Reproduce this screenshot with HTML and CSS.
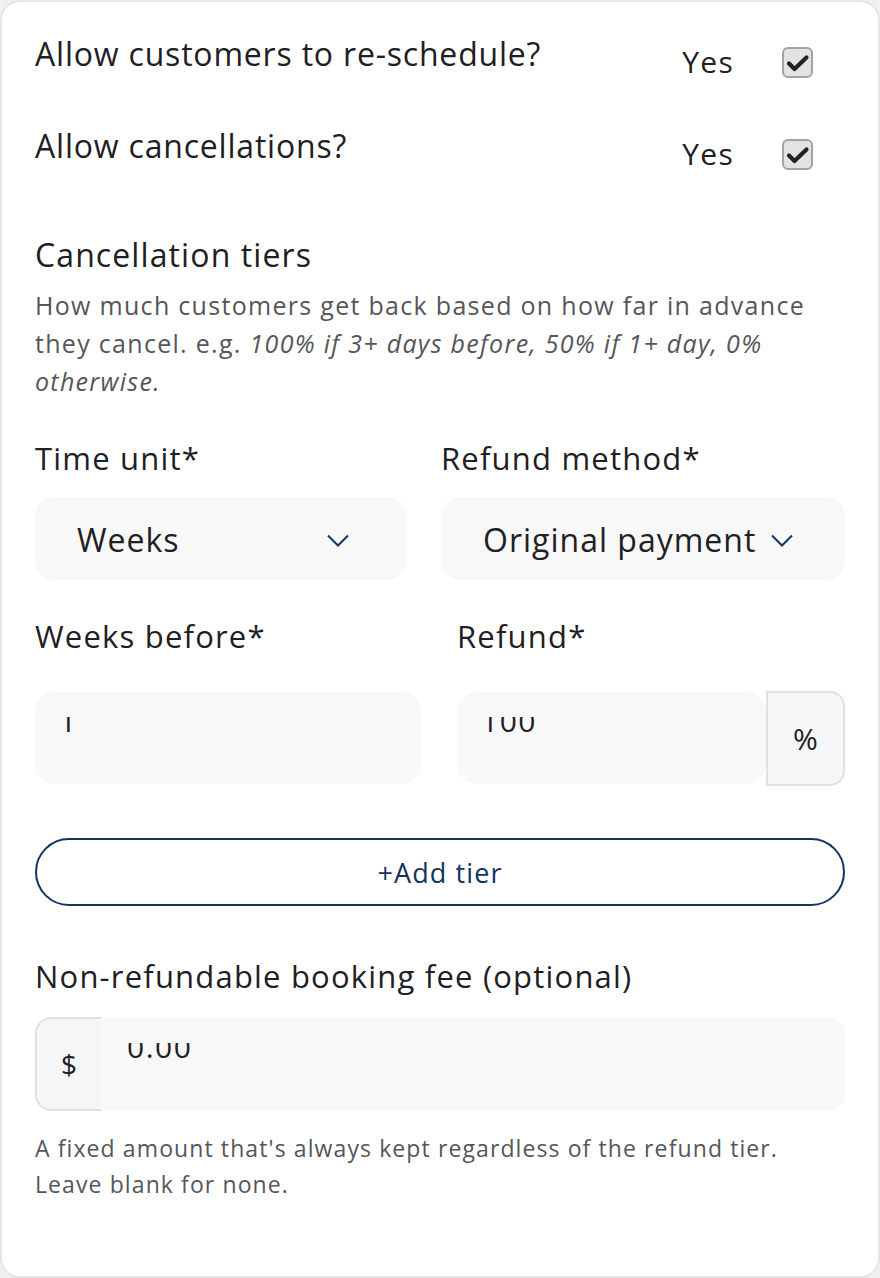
FILE: index.html
```html
<!DOCTYPE html>
<html lang="en">
<head>
<meta charset="utf-8">
<title>Cancellation settings</title>
<link rel="stylesheet" href="styles.css">
</head>
<body>
<div class="card">
  <div class="toggle-row">
    <div class="toggle-label">Allow customers to re-schedule?</div>
    <div class="toggle-control">
      <span class="toggle-yes">Yes</span>
      <svg class="checkbox" width="31" height="31" viewBox="0 0 31 31"><rect x="1" y="1" width="29" height="29" rx="5" fill="#e3e3e3" stroke="#a3a3a3" stroke-width="2"/><path d="M7 16.5 L12.5 22 L24.5 10.5" fill="none" stroke="#222" stroke-width="4.2" stroke-linecap="round" stroke-linejoin="round"/></svg>
    </div>
  </div>
  <div class="toggle-row">
    <div class="toggle-label">Allow cancellations?</div>
    <div class="toggle-control">
      <span class="toggle-yes">Yes</span>
      <svg class="checkbox" width="31" height="31" viewBox="0 0 31 31"><rect x="1" y="1" width="29" height="29" rx="5" fill="#e3e3e3" stroke="#a3a3a3" stroke-width="2"/><path d="M7 16.5 L12.5 22 L24.5 10.5" fill="none" stroke="#222" stroke-width="4.2" stroke-linecap="round" stroke-linejoin="round"/></svg>
    </div>
  </div>

  <h2 class="section-title">Cancellation tiers</h2>
  <p class="section-desc">How much customers get back based on how far in advance they cancel. e.g. <em>100% if 3+ days before, 50% if 1+ day, 0% otherwise.</em></p>

  <div class="grid grid-selects">
    <div class="field">
      <div class="field-label">Time unit*</div>
      <div class="select select-unit">
        <span class="select-text">Weeks</span>
        <svg class="chevron" width="22" height="13" viewBox="0 0 22 13"><path d="M1 1.5 L11 11.5 L21 1.5" fill="none" stroke="#12345f" stroke-width="2"/></svg>
      </div>
    </div>
    <div class="field">
      <div class="field-label">Refund method*</div>
      <div class="select select-method">
        <span class="select-text">Original payment</span>
        <svg class="chevron" width="22" height="13" viewBox="0 0 22 13"><path d="M1 1.5 L11 11.5 L21 1.5" fill="none" stroke="#12345f" stroke-width="2"/></svg>
      </div>
    </div>
  </div>

  <div class="grid grid-inputs">
    <div class="field">
      <div class="field-label">Weeks before*</div>
      <div class="text-input field-control input-weeks">
        <div class="value-clip"><div class="value">1</div></div>
      </div>
    </div>
    <div class="field">
      <div class="field-label">Refund*</div>
      <div class="input-group field-control">
        <div class="text-input input-refund">
          <div class="value-clip"><div class="value">100</div></div>
        </div>
        <div class="addon addon-right">%</div>
      </div>
    </div>
  </div>

  <button class="add-tier" type="button">+Add tier</button>

  <div class="field fee-field">
    <div class="field-label">Non-refundable booking fee (optional)</div>
    <div class="input-group fee-group">
      <div class="addon addon-left">$</div>
      <div class="text-input input-fee">
        <div class="value-clip"><div class="value">0.00</div></div>
      </div>
    </div>
    <p class="helper">A fixed amount that's always kept regardless of the refund tier. Leave blank for none.</p>
  </div>
</div>
</body>
</html>
```

FILE: styles.css
```css
* { box-sizing: border-box; }

html, body {
  margin: 0;
  padding: 0;
  background: #efefef;
}

body {
  font-family: "Open Sans", "Noto Sans", sans-serif;
  color: #1f2023;
}

.card {
  width: 880px;
  height: 1278px;
  background: #ffffff;
  border: 2px solid #e6e6e6;
  border-radius: 20px;
  padding: 32px 33px 0 33px;
}

.toggle-row {
  display: flex;
  justify-content: space-between;
  align-items: flex-start;
  height: 92px;
}

.toggle-label {
  font-size: 32px;
  line-height: 40px;
  font-weight: 500;
  letter-spacing: 0.8px;
}

.toggle-control {
  display: flex;
  align-items: center;
  gap: 48px;
  height: 40px;
  margin-top: 8px;
  margin-right: 32px;
}

.toggle-yes {
  font-size: 30px;
  line-height: 40px;
  letter-spacing: 1.3px;
}

.checkbox { display: block; }

.section-title {
  margin: 17px 0 0 0;
  font-size: 32px;
  line-height: 40px;
  font-weight: 500;
  letter-spacing: 1.1px;
}

.section-desc {
  margin: 11px 0 0 0;
  font-size: 25px;
  line-height: 38px;
  letter-spacing: 1.3px;
  color: #555659;
}

.section-desc em { font-style: italic; }

.grid { display: grid; }

.grid-selects {
  grid-template-columns: 372px 1fr;
  column-gap: 34px;
  margin-top: 38px;
}

.grid-inputs {
  grid-template-columns: 386px 1fr;
  column-gap: 36px;
  margin-top: 36px;
}

.field-label {
  font-size: 31px;
  line-height: 40px;
  font-weight: 500;
  letter-spacing: 1.2px;
}

.select {
  display: flex;
  align-items: center;
  height: 83px;
  margin-top: 19px;
  padding: 3px 0 0 42px;
  background: #f8f8f8;
  border-radius: 20px;
  font-size: 32px;
  letter-spacing: 1px;
}

.select-text { line-height: 40px; }

.chevron { display: block; margin-left: auto; }

.select-unit { padding-right: 58px; }
.select-method { padding-right: 52px; }

.field-control { margin-top: 36px; }

.text-input {
  height: 92px;
  background: #f8f8f8;
  border-radius: 20px;
  padding: 25px 26px 0 24px;
}

.value-clip {
  height: 40px;
  overflow: hidden;
}

.value {
  font-size: 30px;
  line-height: 30px;
  margin-top: -11.5px;
  letter-spacing: 1.5px;
  color: #1f2023;
}

.input-group {
  display: flex;
  align-items: center;
  height: 92px;
}

.input-refund { flex: 1; }

.addon {
  display: flex;
  align-items: center;
  justify-content: center;
  background: #f5f6f8;
  border: 2px solid #dfe1e6;
  font-size: 30px;
  color: #1f2023;
}

.addon-right {
  width: 79px;
  height: 95px;
  border-radius: 0 15px 15px 0;
}

.add-tier {
  display: flex;
  align-items: center;
  justify-content: center;
  width: 100%;
  height: 68px;
  margin-top: 54px;
  background: #ffffff;
  border: 2px solid #12345f;
  border-radius: 34px;
  font-family: "Open Sans", "Noto Sans", sans-serif;
  font-size: 27px;
  font-weight: 500;
  letter-spacing: 1.1px;
  color: #12345f;
  padding: 0;
}

.fee-field { margin-top: 50px; }

.fee-group {
  margin-top: 21px;
  height: 94px;
}

.addon-left {
  width: 66px;
  height: 94px;
  border-right: none;
  border-radius: 16px 0 0 16px;
  font-size: 28px;
}

.input-fee {
  flex: 1;
  height: 92px;
  border-radius: 0 16px 16px 0;
  padding-left: 26px;
}

.helper {
  margin: 19px 0 0 0;
  font-size: 23px;
  line-height: 36px;
  letter-spacing: 1.1px;
  color: #555659;
}
```
